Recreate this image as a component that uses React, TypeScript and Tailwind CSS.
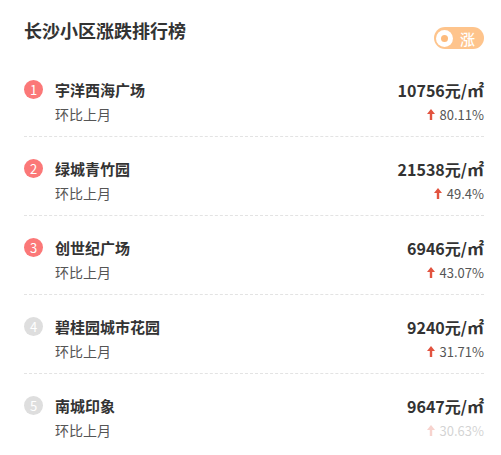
import React from "react";

type Item = {
  rank: number;
  name: string;
  price: string;
  change: string;
  faded?: boolean;
};

const items: Item[] = [
  { rank: 1, name: "宇洋西海广场", price: "10756", change: "80.11%" },
  { rank: 2, name: "绿城青竹园", price: "21538", change: "49.4%" },
  { rank: 3, name: "创世纪广场", price: "6946", change: "43.07%" },
  { rank: 4, name: "碧桂园城市花园", price: "9240", change: "31.71%" },
  { rank: 5, name: "南城印象", price: "9647", change: "30.63%", faded: true },
];

const UpArrow = () => (
  <svg width="8" height="11" viewBox="0 0 8 11" className="shrink-0">
    <path d="M4 0 L8 5 L5.2 5 L5.2 11 L2.8 11 L2.8 5 L0 5 Z" fill="#e2533f" />
  </svg>
);

const Toggle = () => (
  <div className="mt-[9px] flex h-[22px] w-[50px] items-center rounded-full bg-[#fec48c] pl-[2px]">
    <div className="flex h-[17px] w-[17px] items-center justify-center rounded-full bg-white">
      <div className="h-[7px] w-[7px] rounded-full bg-[#fdbb7c]" />
    </div>
    <span className="ml-[7px] text-[15px] font-medium leading-none text-white">涨</span>
  </div>
);

export default function App() {
  return (
    <div
      className="h-[455px] w-[501px] overflow-hidden bg-white pl-[24px] pr-[17px] text-[#333]"
      style={{ fontFamily: '"Noto Sans CJK SC", "Noto Sans", sans-serif' }}
    >
      {/* Header */}
      <header className="flex h-[58px] items-start justify-between pt-[18px]">
        <h1 className="text-[18px] font-bold leading-[24px] text-[#333]">长沙小区涨跌排行榜</h1>
        <Toggle />
      </header>

      {/* Ranking list */}
      <ul>
        {items.map((item, i) => (
          <li
            key={item.rank}
            className={
              i < items.length - 1
                ? "border-b border-dashed border-[#e3e3e3] pb-[12px] pt-[20px]"
                : "pb-[12px] pt-[20px]"
            }
          >
            <div className="flex h-[22px] items-center justify-between">
              <div className="flex items-center">
                <span
                  className={
                    item.rank <= 3
                      ? "flex h-[19px] w-[19px] items-center justify-center rounded-full bg-[#fb7878] text-[13px] leading-none text-white"
                      : "flex h-[19px] w-[19px] items-center justify-center rounded-full bg-[#dedede] text-[13px] leading-none text-white"
                  }
                >
                  {item.rank}
                </span>
                <span className="ml-[12px] text-[15px] font-semibold leading-none text-[#333]">{item.name}</span>
              </div>
              <div className="flex items-baseline text-[16px] font-bold leading-none text-[#333]">
                {item.price}
                <span className="font-semibold">元/</span>
                <span className="text-[17px] font-semibold">㎡</span>
              </div>
            </div>
            <div className="mt-[4px] flex h-[20px] items-center justify-between">
              <span className="ml-[31px] text-[14px] leading-none text-[#555]">环比上月</span>
              <div className={item.faded ? "flex items-center gap-[5px] opacity-25" : "flex items-center gap-[5px]"}>
                <UpArrow />
                <span className="text-[13px] leading-none text-[#555]">{item.change}</span>
              </div>
            </div>
          </li>
        ))}
      </ul>
    </div>
  );
}
